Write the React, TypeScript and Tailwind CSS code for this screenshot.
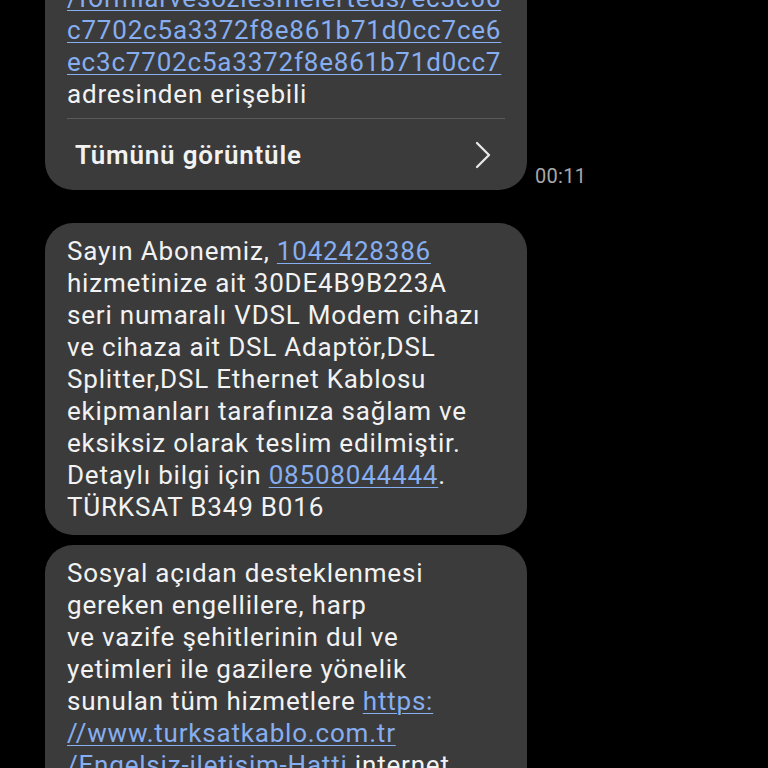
import { ChevronRight } from "lucide-react"

const link = "text-[#86aef0] underline decoration-1 underline-offset-[3px]"

function Lines({ lines }: { lines: React.ReactNode[] }) {
  return (
    <div className="flex flex-col">
      {lines.map((l, i) => (
        <div key={i} className="whitespace-nowrap">
          {l}
        </div>
      ))}
    </div>
  )
}

export default function App() {
  return (
    <div
      className="w-[768px] h-[768px] overflow-hidden bg-black text-[#f2f2f2]"
      style={{ fontFamily: "Roboto, 'Noto Sans', sans-serif" }}
    >
      <div className="flex flex-col pl-[45px] -mt-[30px] text-[26px] leading-[32px] tracking-[0.8px]">
        {/* first message (truncated) */}
        <div className="flex items-end gap-[8px]">
          <div className="w-[482px] rounded-b-[28px] bg-[#3b3b3b] px-[22px]">
            <div className="pt-[12px] pb-[8px]">
              <Lines
                lines={[
                  <span className={link}>/formlarvesozlesmelerteds/ec3c66</span>,
                  <span className={link}>c7702c5a3372f8e861b71d0cc7ce6</span>,
                  <span className={link}>ec3c7702c5a3372f8e861b71d0cc7</span>,
                  "adresinden erişebili",
                ]}
              />
            </div>
            <div className="h-px bg-[#5a5a5a]" />
            <div className="flex items-center justify-between h-[71px] pl-[8px] pr-[4px]">
              <span className="font-semibold text-[26px] tracking-[0.8px]">Tümünü görüntüle</span>
              <ChevronRight size={48} strokeWidth={1.15} className="text-[#e8e8e8] -mr-[6px]" />
            </div>
          </div>
          <span className="text-[20px] leading-[22px] tracking-[0.3px] text-[#a8a8a8] pb-[3px]">00:11</span>
        </div>

        {/* second message */}
        <div className="mt-[33px] w-[482px] rounded-[28px] bg-[#3b3b3b] px-[22px] py-[12px]">
          <Lines
            lines={[
              <>
                Sayın Abonemiz, <span className={link}>1042428386</span>
              </>,
              "hizmetinize ait 30DE4B9B223A",
              "seri numaralı VDSL Modem cihazı",
              "ve cihaza ait DSL Adaptör,DSL",
              "Splitter,DSL Ethernet Kablosu",
              "ekipmanları tarafınıza sağlam ve",
              "eksiksiz olarak teslim edilmiştir.",
              <>
                Detaylı bilgi için <span className={link}>08508044444</span>.
              </>,
              "TÜRKSAT B349 B016",
            ]}
          />
        </div>

        {/* third message */}
        <div className="mt-[10px] w-[482px] rounded-t-[28px] bg-[#3b3b3b] px-[22px] py-[12px]">
          <Lines
            lines={[
              "Sosyal açıdan desteklenmesi",
              "gereken engellilere, harp",
              "ve vazife şehitlerinin dul ve",
              "yetimleri ile gazilere yönelik",
              <>
                sunulan tüm hizmetlere <span className={link}>https:</span>
              </>,
              <span className={link}>//www.turksatkablo.com.tr</span>,
              <>
                <span className={link}>/Engelsiz-iletisim-Hatti</span> internet
              </>,
              "adresinden ulaşabilirsiniz.",
            ]}
          />
        </div>
      </div>
    </div>
  )
}
